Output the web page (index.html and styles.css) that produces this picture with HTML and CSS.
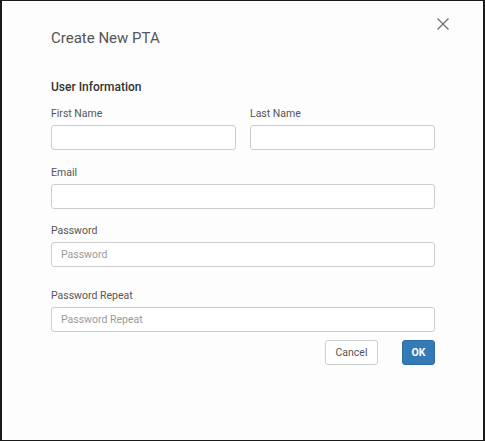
FILE: index.html
```html
<!DOCTYPE html>
<html>
<head>
<meta charset="utf-8">
<link rel="stylesheet" href="styles.css">
</head>
<body>
<div class="dialog">
  <button class="close" aria-label="Close">
    <svg width="12" height="12" viewBox="0 0 12 12"><path d="M0.5 0.5 L11.5 11.5 M11.5 0.5 L0.5 11.5" stroke="#6f6f6f" stroke-width="1.3" fill="none"/></svg>
  </button>
  <h1 class="title">Create New PTA</h1>
  <h2 class="section">User Information</h2>
  <div class="row">
    <div class="field">
      <label class="label">First Name</label>
      <input class="input" type="text">
    </div>
    <div class="field">
      <label class="label">Last Name</label>
      <input class="input" type="text">
    </div>
  </div>
  <div class="field spaced">
    <label class="label">Email</label>
    <input class="input" type="text">
  </div>
  <div class="field spaced-sm">
    <label class="label">Password</label>
    <input class="input" type="password" placeholder="Password">
  </div>
  <div class="field spaced-lg">
    <label class="label">Password Repeat</label>
    <input class="input" type="password" placeholder="Password Repeat">
  </div>
  <div class="actions">
    <button class="btn btn-cancel">Cancel</button>
    <button class="btn btn-ok">OK</button>
  </div>
</div>
</body>
</html>
```

FILE: styles.css
```css
* { box-sizing: border-box; }
html, body { margin: 0; padding: 0; background: #fff; }
body { font-family: Roboto, Inter, sans-serif; }
.dialog {
  position: relative;
  width: 485px;
  height: 441px;
  border-style: solid;
  border-color: #1a1a1a;
  border-width: 1px 2px 1px 2px;
  background: #fdfdfd;
  padding: 27px 48px 0 49px;
}
.close {
  position: absolute;
  top: 17px;
  right: 34px;
  width: 12px;
  height: 12px;
  padding: 0;
  border: 0;
  background: none;
  display: flex;
}
.title {
  margin: 0;
  font-size: 15px;
  line-height: 20px;
  font-weight: 400;
  color: #555;
}
.section {
  margin: 31px 0 0;
  font-size: 12px;
  line-height: 16px;
  font-weight: 500;
  color: #333;
}
.row {
  display: flex;
  gap: 14px;
  margin-top: 12px;
}
.row .field { flex: 1 1 0; min-width: 0; }
.field { display: flex; flex-direction: column; }
.spaced { margin-top: 16px; }
.spaced-sm { margin-top: 15px; }
.spaced-lg { margin-top: 22px; }
.label {
  font-size: 10.5px;
  line-height: 14px;
  color: #555;
  margin-bottom: 4px;
}
.input {
  width: 100%;
  height: 25px;
  border: 1px solid #cdcdcd;
  border-radius: 3px;
  background: #fff;
  padding: 0 9px;
  font-family: inherit;
  font-size: 10.5px;
  color: #333;
  outline: none;
}
.input::placeholder { color: #9a9a9a; }
.actions {
  display: flex;
  justify-content: flex-end;
  gap: 24px;
  margin-top: 8px;
}
.btn {
  height: 25px;
  border-radius: 3px;
  font-family: inherit;
  font-size: 10.5px;
  padding: 0;
  cursor: pointer;
}
.btn-cancel {
  width: 53px;
  background: #fff;
  border: 1px solid #cfcfcf;
  color: #555;
}
.btn-ok {
  width: 33px;
  background: #337ab7;
  border: 1px solid #2e6da4;
  color: #fff;
  font-weight: 700;
}
```
